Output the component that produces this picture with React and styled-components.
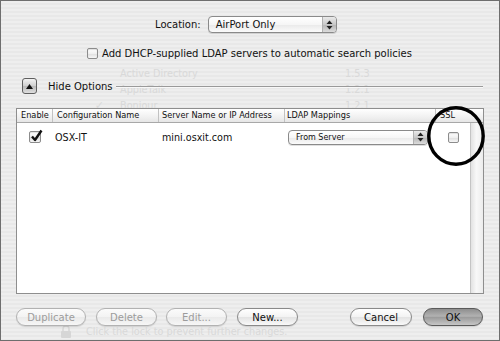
import React from "react";
import styled, { createGlobalStyle } from "styled-components";

const GlobalStyle = createGlobalStyle`
  html, body {
    margin: 0;
    padding: 0;
    background: #ececec;
  }
  body {
    font-family: "DejaVu Sans", "Noto Sans", sans-serif;
  }
`;

const Sheet = styled.div`
  width: 500px;
  height: 341px;
  box-sizing: border-box;
  border: 1px solid #6e6e6e;
  background: repeating-linear-gradient(to bottom, #eeeeee 0 2px, #e8e8e8 2px 4px);
  display: grid;
  overflow: hidden;
  font-size: 10px;
  color: #111;
`;

const Layer = styled.div`
  grid-area: 1 / 1;
  display: flex;
  flex-direction: column;
  min-width: 0;
`;

/* faint window content behind the translucent sheet */
const Backdrop = styled(Layer)`
  padding: 64px 0 2px;
  color: #d9d9d9;
`;

const GhostRow = styled.div`
  display: grid;
  grid-template-columns: 119px 225px auto;
  height: 16px;
  align-items: center;
  font-size: 9.7px;
`;

const GhostCheck = styled.span`
  justify-self: end;
  padding-right: 16px;
  font-size: 11px;
`;

const GhostFooter = styled.div`
  margin-top: auto;
  display: flex;
  align-items: center;
  gap: 14px;
  padding-left: 59px;
  height: 14px;
  font-size: 9.7px;
`;

const Content = styled(Layer)`
  padding-top: 15px;
`;

const LocationRow = styled.div`
  display: flex;
  align-items: center;
  gap: 7px;
  height: 17px;
  padding-left: 154px;
`;

const PopupBox = styled.div`
  display: flex;
  width: ${p => p.$width}px;
  height: ${p => p.$height}px;
  box-sizing: border-box;
  border: 1px solid #8a8a8a;
  border-radius: 4px;
  background: linear-gradient(#ffffff, #f6f6f6 50%, #e9e9e9 51%, #fbfbfb);
  box-shadow: 0 1px 0 rgba(0, 0, 0, 0.12);
  overflow: hidden;
`;

const PopupLabel = styled.span`
  flex: 1;
  display: flex;
  align-items: center;
  padding-left: 7px;
  font-size: ${p => p.$size}px;
`;

const PopupArrows = styled.span`
  width: 13px;
  display: flex;
  align-items: center;
  justify-content: center;
  border-left: 1px solid #b0b0b0;
  background: linear-gradient(#eaeaea, #c9c9c9 50%, #b4b4b4 51%, #dcdcdc);
`;

const CheckRow = styled.div`
  display: flex;
  align-items: center;
  gap: 4px;
  height: 14px;
  margin-top: 13px;
  padding-left: 86px;
`;

const Box = styled.span`
  position: relative;
  display: inline-flex;
  width: ${p => p.$size}px;
  height: ${p => p.$size}px;
  box-sizing: border-box;
  border: 1px solid #8c8c8c;
  border-radius: 2px;
  background: linear-gradient(#ffffff, #f0f0f0 50%, #dedede 51%, #f6f6f6);
  box-shadow: inset 0 1px 1px rgba(0, 0, 0, 0.12);
`;

const Tick = styled.svg`
  position: absolute;
  left: 0px;
  top: -3px;
`;

const OptionsRow = styled.div`
  display: flex;
  align-items: center;
  gap: 11px;
  height: 16px;
  margin-top: 18px;
  padding: 0 16px 0 21px;
`;

const Disclosure = styled.span`
  display: flex;
  align-items: center;
  justify-content: center;
  width: 15px;
  height: 16px;
  box-sizing: border-box;
  border: 1px solid #5e5e5e;
  border-radius: 3px;
  background: linear-gradient(#f2f2f2, #cfcfcf 50%, #b9b9b9 51%, #dedede);
`;

const Rule = styled.span`
  flex: 1;
  height: 1px;
  margin-left: -8px;
  margin-top: 1px;
  background: #9a9a9a;
  border-bottom: 1px solid #f8f8f8;
`;

const cols = "36px 106px 126px 151px 1fr";

const Table = styled.div`
  position: relative;
  margin: 14px 15px 0;
  height: 186px;
  box-sizing: border-box;
  border: 1px solid #8e8e8e;
  background: #fff;
  display: flex;
  flex-direction: column;
`;

const Header = styled.div`
  display: grid;
  grid-template-columns: ${cols};
  height: 13px;
  border-bottom: 1px solid #a8a8a8;
  background: linear-gradient(#ffffff, #f1f1f1 60%, #e6e6e6);
`;

const HeadCell = styled.div`
  font-size: 8.2px;
  line-height: 13px;
  padding-left: ${p => p.$pad}px;
  border-right: ${p => (p.$last ? "none" : "1px solid #c2c2c2")};
  white-space: nowrap;
  overflow: hidden;
`;

const Body = styled.div`
  flex: 1;
  display: flex;
`;

const Rows = styled.div`
  flex: 1;
`;

const Scroller = styled.div`
  width: 12px;
  border-left: 1px solid #c4c4c4;
  background: linear-gradient(to right, #e2e2e2, #f8f8f8 45%, #ececec);
`;

const Row = styled.div`
  display: grid;
  grid-template-columns: ${cols};
  height: 28px;
  align-items: center;
  font-size: 9.6px;
`;

const Cell = styled.div`
  display: flex;
  justify-content: ${p => (p.$center ? "center" : "flex-start")};
  padding-left: ${p => p.$pad || 0}px;
  padding-right: ${p => p.$padRight || 0}px;
  white-space: nowrap;
`;

const Ring = styled.svg`
  position: absolute;
  left: 410px;
  top: -3px;
  pointer-events: none;
`;

const ButtonRow = styled.div`
  display: flex;
  align-items: center;
  gap: 10px;
  margin-top: 14px;
  padding: 0 16px 0 15px;
`;

const Spacer = styled.span`
  flex: 1;
`;

const Pill = styled.span`
  display: flex;
  align-items: center;
  justify-content: center;
  width: ${p => p.$width}px;
  height: 18px;
  box-sizing: border-box;
  margin-left: ${p => p.$shift || 0}px;
  border-radius: 9px;
  border: 1px solid ${p => (p.$default ? "#5a5a5a" : p.$disabled ? "#b2b2b2" : "#8a8a8a")};
  color: ${p => (p.$disabled ? "#9c9c9c" : "#111")};
  background: ${p =>
    p.$default
      ? "linear-gradient(#8e8e8e, #b2b2b2 45%, #9b9b9b 52%, #c6c6c6)"
      : p.$disabled
      ? "linear-gradient(#fbfbfb, #f3f3f3 50%, #eaeaea 51%, #f6f6f6)"
      : "linear-gradient(#ffffff, #f3f3f3 50%, #e3e3e3 51%, #f9f9f9)"};
  box-shadow: 0 1px 1px rgba(0, 0, 0, 0.12);
  font-size: 10px;
`;

function Arrows() {
  return (
    <svg width="7" height="10" viewBox="0 0 7 10">
      <path d="M3.5 0.5 L6.5 4 H0.5 Z" fill="#222" />
      <path d="M3.5 9.5 L6.5 6 H0.5 Z" fill="#222" />
    </svg>
  );
}

function Popup({ label, width, height, size }) {
  return (
    <PopupBox $width={width} $height={height}>
      <PopupLabel $size={size}>{label}</PopupLabel>
      <PopupArrows>
        <Arrows />
      </PopupArrows>
    </PopupBox>
  );
}

function Checkbox({ checked, size = 11 }) {
  return (
    <Box $size={size}>
      {checked && (
        <Tick width="13" height="14" viewBox="0 0 13 14">
          <path d="M2 7.5 L5 11 L11.5 1.5" fill="none" stroke="#111" strokeWidth="2.4" strokeLinejoin="round" />
        </Tick>
      )}
    </Box>
  );
}

function LockIcon() {
  return (
    <svg width="12" height="13" viewBox="0 0 12 13">
      <path d="M3 6 V4 a3 3 0 0 1 6 0 V6" fill="none" stroke="#d6d6d6" strokeWidth="1.5" />
      <rect x="1" y="6" width="10" height="7" rx="1" fill="#d6d6d6" />
    </svg>
  );
}

export default function App() {
  return (
    <>
      <GlobalStyle />
      <Sheet>
        <Backdrop>
          <GhostRow>
            <span />
            <span>Active Directory</span>
            <span>1.5.3</span>
          </GhostRow>
          <GhostRow>
            <span />
            <span>AppleTalk</span>
            <span>1.2.1</span>
          </GhostRow>
          <GhostRow>
            <GhostCheck>✓</GhostCheck>
            <span>Bonjour</span>
            <span>1.2.1</span>
          </GhostRow>
          <GhostFooter>
            <LockIcon />
            <span>Click the lock to prevent further changes.</span>
          </GhostFooter>
        </Backdrop>

        <Content>
          <LocationRow>
            <span>Location:</span>
            <Popup label="AirPort Only" width={129} height={17} size={10} />
          </LocationRow>

          <CheckRow>
            <Checkbox />
            <span>Add DHCP-supplied LDAP servers to automatic search policies</span>
          </CheckRow>

          <OptionsRow>
            <Disclosure>
              <svg width="7" height="5" viewBox="0 0 7 5">
                <path d="M3.5 0 L7 5 H0 Z" fill="#111" />
              </svg>
            </Disclosure>
            <span>Hide Options</span>
            <Rule />
          </OptionsRow>

          <Table>
            <Header>
              <HeadCell $pad={4}>Enable</HeadCell>
              <HeadCell $pad={4}>Configuration Name</HeadCell>
              <HeadCell $pad={3}>Server Name or IP Address</HeadCell>
              <HeadCell $pad={2}>LDAP Mappings</HeadCell>
              <HeadCell $pad={4} $last>SSL</HeadCell>
            </Header>
            <Body>
              <Rows>
                <Row>
                  <Cell $center>
                    <Checkbox checked size={12} />
                  </Cell>
                  <Cell $pad={2}>OSX-IT</Cell>
                  <Cell $pad={3}>mini.osxit.com</Cell>
                  <Cell $pad={3}>
                    <Popup label="From Server" width={140} height={15} size={8} />
                  </Cell>
                  <Cell $center>
                    <Checkbox />
                  </Cell>
                </Row>
              </Rows>
              <Scroller />
            </Body>
            <Ring width="58" height="60" viewBox="0 0 58 60">
              <ellipse cx="29" cy="30" rx="27.2" ry="28.2" fill="none" stroke="#000" strokeWidth="3.4" />
            </Ring>
          </Table>

          <ButtonRow>
            <Pill $width={70} $disabled>Duplicate</Pill>
            <Pill $width={61} $disabled>Delete</Pill>
            <Pill $width={61} $disabled $shift={-1}>Edit...</Pill>
            <Pill $width={61}>New...</Pill>
            <Spacer />
            <Pill $width={62}>Cancel</Pill>
            <Pill $width={60} $shift={1} $default>OK</Pill>
          </ButtonRow>
        </Content>
      </Sheet>
    </>
  );
}
